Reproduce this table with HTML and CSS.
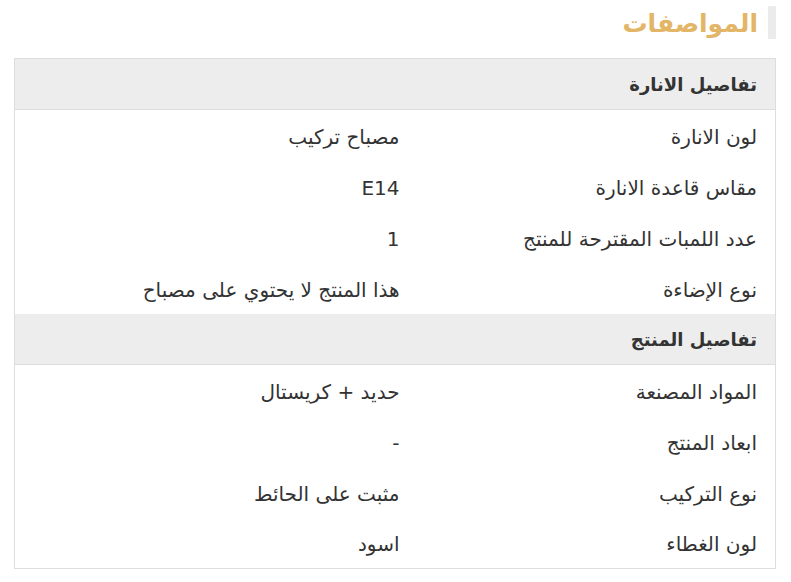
FILE: index.html
```html
<!DOCTYPE html>
<html lang="ar" dir="rtl">
<head>
<meta charset="utf-8">
<link rel="stylesheet" href="styles.css">
</head>
<body>
<section class="specs">
  <h2 class="specs-title">المواصفات</h2>
  <table class="specs-table">
    <tbody>
      <tr class="group"><th colspan="2">تفاصيل الانارة</th></tr>
      <tr><td class="label">لون الانارة</td><td class="value">مصباح تركيب</td></tr>
      <tr><td class="label">مقاس قاعدة الانارة</td><td class="value">E14</td></tr>
      <tr><td class="label">عدد اللمبات المقترحة للمنتج</td><td class="value">1</td></tr>
      <tr><td class="label">نوع الإضاءة</td><td class="value">هذا المنتج لا يحتوي على مصباح</td></tr>
      <tr class="group"><th colspan="2">تفاصيل المنتج</th></tr>
      <tr><td class="label">المواد المصنعة</td><td class="value">حديد + كريستال</td></tr>
      <tr><td class="label">ابعاد المنتج</td><td class="value">-</td></tr>
      <tr><td class="label">نوع التركيب</td><td class="value">مثبت على الحائط</td></tr>
      <tr><td class="label">لون الغطاء</td><td class="value">اسود</td></tr>
    </tbody>
  </table>
</section>
</body>
</html>
```
FILE: styles.css
```css
html, body {
  margin: 0;
  padding: 0;
  background: #fff;
}
body {
  font-family: "DejaVu Sans", "Noto Sans", sans-serif;
  color: #333;
}
.specs {
  padding: 6px 15px 0 14px;
}
.specs-title {
  margin: 0 0 19px 0;
  height: 33px;
  line-height: 35px;
  border-right: 8px solid #ebebeb;
  padding-right: 10px;
  font-size: 25px;
  font-weight: bold;
  color: #e3b567;
}
.specs-table {
  width: 100%;
  border-collapse: collapse;
  border: 1px solid #dddddd;
  font-size: 20px;
}
.specs-table th {
  box-sizing: border-box;
  background: #ededed;
  border-bottom: 1px solid #dddddd;
  height: 51px;
  padding: 2px 18px 0 18px;
  line-height: 24px;
  text-align: right;
  font-weight: bold;
  font-size: 18px;
}
.specs-table td {
  box-sizing: border-box;
  height: 51px;
  padding: 3px 18px 0 18px;
  line-height: 24px;
  text-align: right;
}
.specs-table td.label {
  width: 358px;
}
```
